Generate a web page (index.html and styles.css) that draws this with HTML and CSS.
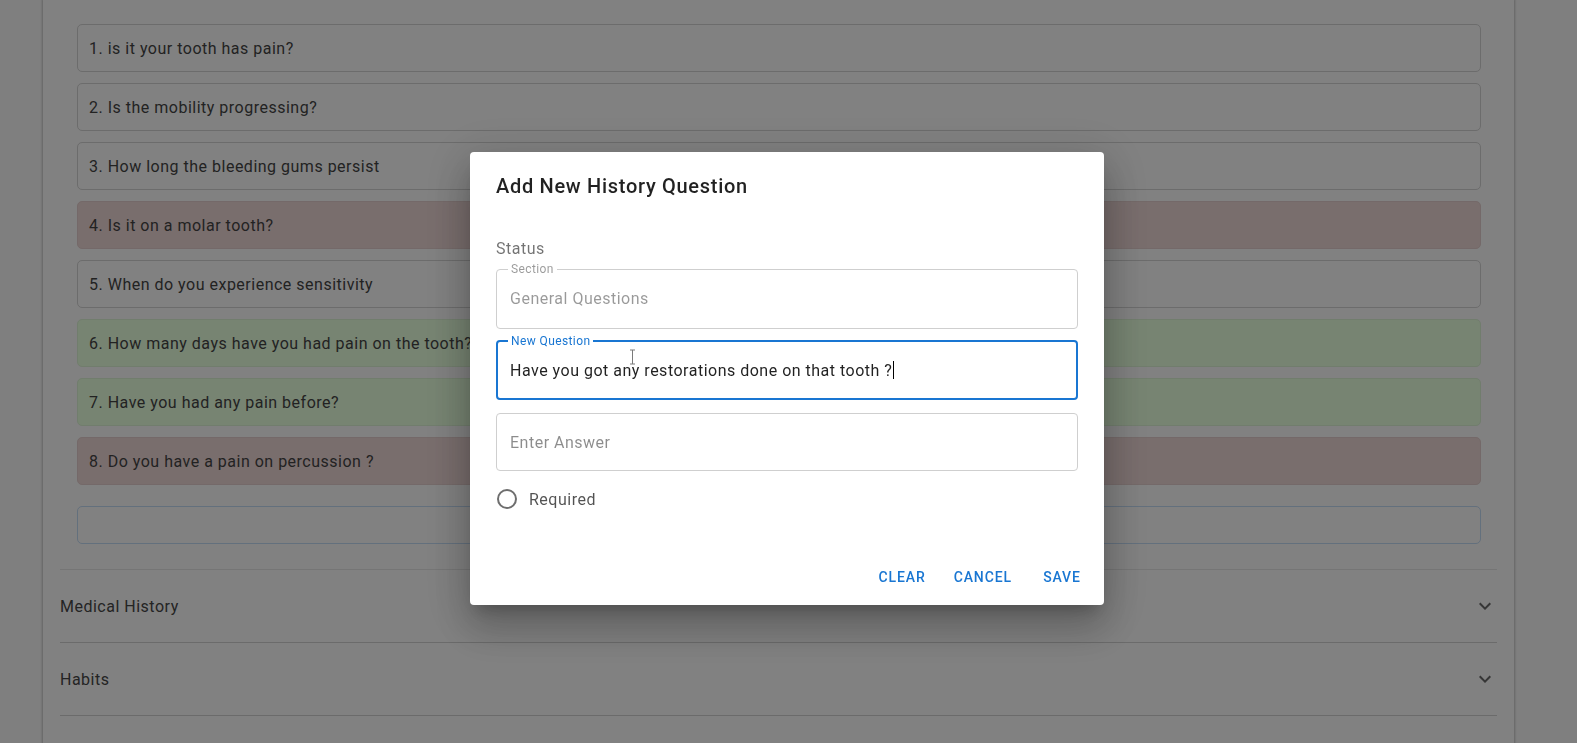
FILE: index.html
```
<!DOCTYPE html>
<html lang="en">
<head>
<meta charset="utf-8">
<title>Add New History Question</title>
<link rel="stylesheet" href="styles.css">
</head>
<body>
<div class="page">
  <div class="card">
    <div class="panel panel-open">
      <div class="panel-content">
        <div class="q">1. is it your tooth has pain?</div>
        <div class="q">2. Is the mobility progressing?</div>
        <div class="q">3. How long the bleeding gums persist</div>
        <div class="q q-red">4. Is it on a molar tooth?</div>
        <div class="q">5. When do you experience sensitivity</div>
        <div class="q q-green">6. How many days have you had pain on the tooth?</div>
        <div class="q q-green">7. Have you had any pain before?</div>
        <div class="q q-red">8. Do you have a pain on percussion ?</div>
        <div class="new-input"></div>
      </div>
    </div>
    <div class="panel">
      <div class="panel-header">
        <span>Medical History</span>
        <svg class="chev" viewBox="0 0 24 24" width="24" height="24"><path d="M7.41 8.58L12 13.17L16.59 8.58L18 10L12 16L6 10Z"/></svg>
      </div>
    </div>
    <div class="panel">
      <div class="panel-header">
        <span>Habits</span>
        <svg class="chev" viewBox="0 0 24 24" width="24" height="24"><path d="M7.41 8.58L12 13.17L16.59 8.58L18 10L12 16L6 10Z"/></svg>
      </div>
    </div>
    <div class="panel">
      <div class="panel-header"></div>
    </div>
  </div>
</div>

<div class="overlay"></div>

<div class="dialog">
  <h2 class="dialog-title">Add New History Question</h2>
  <div class="dialog-body">
    <div class="status">Status</div>
    <fieldset class="field field-disabled">
      <legend>Section</legend>
      <div class="field-value">General Questions</div>
    </fieldset>
    <fieldset class="field field-focused">
      <legend>New Question</legend>
      <div class="field-value">Have you got any restorations done on that tooth ?<span class="caret"></span></div>
      <svg class="ibeam" viewBox="0 0 7 16" width="7" height="16"><path d="M1 1H6M1 15H6M3.5 1V15" fill="none" stroke="#7a7a7a" stroke-width="1"/></svg>
    </fieldset>
    <div class="field-plain">Enter Answer</div>
    <div class="radio-row">
      <span class="radio-circle"></span>
      <span class="radio-label">Required</span>
    </div>
  </div>
  <div class="dialog-actions">
    <button class="btn">Clear</button>
    <button class="btn">Cancel</button>
    <button class="btn">Save</button>
  </div>
</div>
</body>
</html>
```
FILE: styles.css
```
* { box-sizing: border-box; }

html, body {
  margin: 0;
  height: 743px;
  overflow: hidden;
}

body {
  font-family: Roboto, "Noto Sans", Arial, sans-serif;
  letter-spacing: 0.5px;
  background: #d4d4d4;
  color: #3a3a3a;
}

.page {
  padding-left: 43px;
}

.card {
  width: 1471px;
  min-height: 800px;
  background: #d7d7d7;
  padding: 0 17px;
  box-shadow: 0 0 2px 1px rgba(0, 0, 0, 0.22);
}

.panel {
  border-bottom: 1px solid #b2b2b2;
}

.panel-open {
  border-bottom-color: #c4c4c4;
}

.panel-content {
  display: flex;
  flex-direction: column;
  gap: 11px;
  padding: 24px 16px 25px 17px;
}

.q {
  height: 48px;
  border: 1px solid #b4b4b4;
  border-radius: 5px;
  padding: 0 11px;
  display: flex;
  align-items: center;
  font-size: 16px;
  color: #3a3a3a;
}

.q-red {
  background: #cab7b6;
  border-color: #c2b0af;
}

.q-green {
  background: #c6dcbe;
  border-color: #bdd1b6;
}

.new-input {
  margin-top: 10px;
  height: 38px;
  border: 1px solid #a6bbd1;
  border-radius: 5px;
}

.panel-header {
  height: 72px;
  display: flex;
  align-items: center;
  justify-content: space-between;
  font-size: 16px;
  color: #3c3c3c;
}

.chev {
  fill: #5a5a5a;
}

.overlay {
  position: fixed;
  inset: 0;
  background: rgba(0, 0, 0, 0.4);
}

.dialog {
  position: fixed;
  left: 470px;
  top: 152px;
  width: 634px;
  background: #fff;
  border-radius: 4px;
  box-shadow: 0 11px 15px -7px rgba(0, 0, 0, 0.22), 0 24px 38px 3px rgba(0, 0, 0, 0.16), 0 9px 46px 8px rgba(0, 0, 0, 0.14);
}

.dialog-title {
  margin: 0;
  padding: 18px 26px 0;
  font-size: 20px;
  font-weight: 500;
  line-height: 32px;
  letter-spacing: 0.7px;
  color: rgba(0, 0, 0, 0.87);
}

.dialog-body {
  padding: 0 26px;
  display: flex;
  flex-direction: column;
}

.status {
  margin-top: 37px;
  font-size: 16px;
  line-height: 20px;
  color: rgba(0, 0, 0, 0.55);
}

.field {
  position: relative;
  margin: 0;
  min-width: 0;
  border-radius: 4px;
}

.field legend {
  font-size: 12px;
  line-height: 12px;
  letter-spacing: 0.4px;
  padding: 0 3px;
}

.field-value {
  height: 46px;
  display: flex;
  align-items: center;
  font-size: 16px;
  padding-left: 2px;
}

.field-disabled {
  margin-top: 4px;
  border: 1px solid #cfcfcf;
  padding: 0 11px 6px;
}

.field-disabled .field-value {
  height: 47px;
}

.field-disabled legend,
.field-disabled .field-value {
  color: rgba(0, 0, 0, 0.4);
}

.field-focused {
  margin-top: 6px;
  border: 2px solid #1976d2;
  padding: 0 10px 5px;
}

.field-focused legend {
  color: #1976d2;
}

.field-focused .field-value {
  color: rgba(0, 0, 0, 0.87);
}

.caret {
  display: inline-block;
  width: 1px;
  height: 18px;
  margin-left: 1px;
  background: #000;
}

.ibeam {
  position: absolute;
  left: 131px;
  top: 2px;
}

.field-plain {
  margin-top: 13px;
  height: 58px;
  border: 1px solid #cfcfcf;
  border-radius: 4px;
  padding-left: 13px;
  display: flex;
  align-items: center;
  font-size: 16px;
  color: rgba(0, 0, 0, 0.45);
}

.radio-row {
  margin-top: 16px;
  height: 24px;
  display: flex;
  align-items: center;
  gap: 12px;
  padding-left: 1px;
}

.radio-circle {
  width: 20px;
  height: 20px;
  border: 2px solid #6e6e6e;
  border-radius: 50%;
}

.radio-label {
  font-size: 16px;
  color: rgba(0, 0, 0, 0.68);
}

.dialog-actions {
  margin-top: 48px;
  padding: 0 10px 10px;
  display: flex;
  justify-content: flex-end;
  gap: 8px;
}

.btn {
  height: 36px;
  min-width: 64px;
  padding: 0 10px;
  border: none;
  background: none;
  font-family: inherit;
  font-size: 14px;
  font-weight: 500;
  letter-spacing: 0.9px;
  text-transform: uppercase;
  color: #1976d2;
}
```
